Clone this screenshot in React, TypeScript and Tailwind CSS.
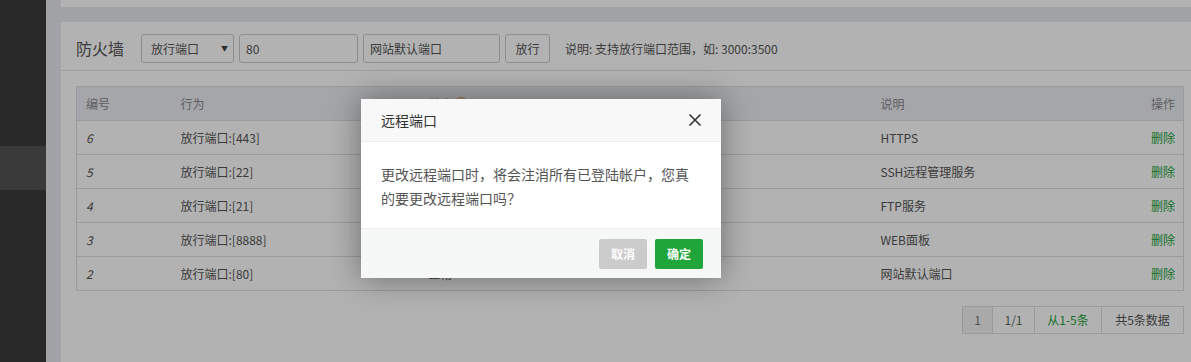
import React from "react";

const rows = [
  { id: 6, act: "放行端口:[443]", st: "", desc: "HTTPS" },
  { id: 5, act: "放行端口:[22]", st: "", desc: "SSH远程管理服务" },
  { id: 4, act: "放行端口:[21]", st: "", desc: "FTP服务" },
  { id: 3, act: "放行端口:[8888]", st: "", desc: "WEB面板" },
  { id: 2, act: "放行端口:[80]", st: "正常", desc: "网站默认端口" },
];

export default function App() {
  return (
    <div className="relative flex h-[362px] w-[1191px] overflow-hidden font-['Noto_Sans_CJK_SC',sans-serif] text-[12px] text-[#555]">
      {/* sidebar */}
      <div className="flex w-[46px] shrink-0 flex-col bg-[#3c3c3c]">
        <div className="h-[146px]" />
        <div className="h-[44px] bg-[#535353]" />
      </div>
      {/* main */}
      <div className="flex min-w-0 flex-1 flex-col bg-[#e9eaef] pl-[15px]">
        <div className="h-[7px] shrink-0 bg-white" />
        <div className="h-[15px] shrink-0" />
        <div className="flex flex-1 flex-col bg-white">
          <div className="flex items-center border-b border-[#e2e2e2] pb-[7px] pl-[15px] pt-[12px]">
            <div className="w-[65px] text-[16px] leading-[29px] text-[#555]">防火墙</div>
            <div className="flex h-[29px] w-[93px] items-center justify-between rounded-[3px] border border-[#ccc] pl-[9px] pr-[5px] text-[12px] text-[#555]">
              <span>放行端口</span>
              <span className="text-[7px] text-[#444]">▼</span>
            </div>
            <div className="ml-[5px] flex h-[29px] w-[119px] items-center rounded-[3px] border border-[#ccc] px-[6px] text-[12px] text-[#555]">
              80
            </div>
            <div className="ml-[5px] flex h-[29px] w-[137px] items-center rounded-[3px] border border-[#ccc] px-[6px] text-[12px] text-[#555]">
              网站默认端口
            </div>
            <div className="ml-[5px] flex h-[29px] w-[45px] items-center justify-center rounded-[3px] border border-[#ccc] bg-white text-[12px] text-[#555]">
              放行
            </div>
            <div className="ml-[15px] text-[12px] text-[#555]">说明: 支持放行端口范围，如: 3000:3500</div>
          </div>
          <div className="pl-[15px] pr-[7px] pt-[15px]">
            <table className="w-full border-collapse border border-[#ddd] text-[12px]">
              <thead>
                <tr className="h-[34px] bg-[#eceef2] text-[#888]">
                  <th className="w-[95px] pl-[9px] text-left font-normal">编号</th>
                  <th className="w-[248px] pl-[9px] text-left font-normal">行为</th>
                  <th className="w-[452px] pl-[9px] text-left font-normal">
                    <span className="inline-flex items-center">
                      状态
                      <span className="ml-[1px] inline-block h-[14px] w-[14px] rounded-full border-[1.5px] border-[#e8922a]" />
                    </span>
                  </th>
                  <th className="pl-[9px] text-left font-normal">说明</th>
                  <th className="pr-[8px] text-right font-normal">操作</th>
                </tr>
              </thead>
              <tbody>
                {rows.map((r) => (
                  <tr key={r.id} className="h-[34px] border-t border-[#ddd] text-[#555]">
                    <td className="pl-[9px] italic">{r.id}</td>
                    <td className="pl-[9px]">{r.act}</td>
                    <td className="pl-[9px]">{r.st}</td>
                    <td className="pl-[9px]">{r.desc}</td>
                    <td className="pr-[8px] text-right text-[#20a53a]">删除</td>
                  </tr>
                ))}
              </tbody>
            </table>
            <div className="mt-[15px] flex justify-end">
              <div className="flex h-[28px] border border-[#ddd] text-[12px]">
                <div className="flex w-[29px] items-center justify-center bg-[#f2f2f2] text-[#777]">1</div>
                <div className="flex w-[42px] items-center justify-center border-l border-[#ddd] text-[#556b55]">1/1</div>
                <div className="flex w-[67px] items-center justify-center border-l border-[#ddd] text-[#20a53a]">从1-5条</div>
                <div className="flex w-[82px] items-center justify-center border-l border-[#ddd] text-[#555]">共5条数据</div>
              </div>
            </div>
          </div>
        </div>
      </div>

      {/* overlay */}
      <div className="absolute inset-0 bg-black/30" />

      {/* modal */}
      <div className="absolute left-[361px] top-[99px] w-[360px] bg-white shadow-[0_0_30px_rgba(0,0,0,0.4)]">
        <div className="flex h-[43px] items-center justify-between border-b border-[#eee] bg-[#f8f8f8] pl-[20px] pr-[18px]">
          <span className="text-[14px] text-[#333]">远程端口</span>
          <svg width="14" height="14" viewBox="0 0 14 14" className="mr-[1px]">
            <path d="M1.5 1.5 L12.5 12.5 M12.5 1.5 L1.5 12.5" stroke="#333" strokeWidth="1.6" fill="none" />
          </svg>
        </div>
        <div className="px-[20px] pb-[18px] pt-[20px] text-[14px] leading-[24px] text-[#555]">
          更改远程端口时，将会注消所有已登陆帐户，您真的要更改远程端口吗？
        </div>
        <div className="flex h-[50px] items-center justify-end gap-[8px] border-t border-[#eee] bg-[#f6f7f7] pr-[18px]">
          <div className="flex h-[30px] w-[48px] items-center justify-center rounded-[2px] bg-[#cbcbcb] text-[12px] font-bold text-white">
            取消
          </div>
          <div className="flex h-[30px] w-[48px] items-center justify-center rounded-[2px] bg-[#20a53a] text-[12px] font-bold text-white">
            确定
          </div>
        </div>
      </div>
    </div>
  );
}
